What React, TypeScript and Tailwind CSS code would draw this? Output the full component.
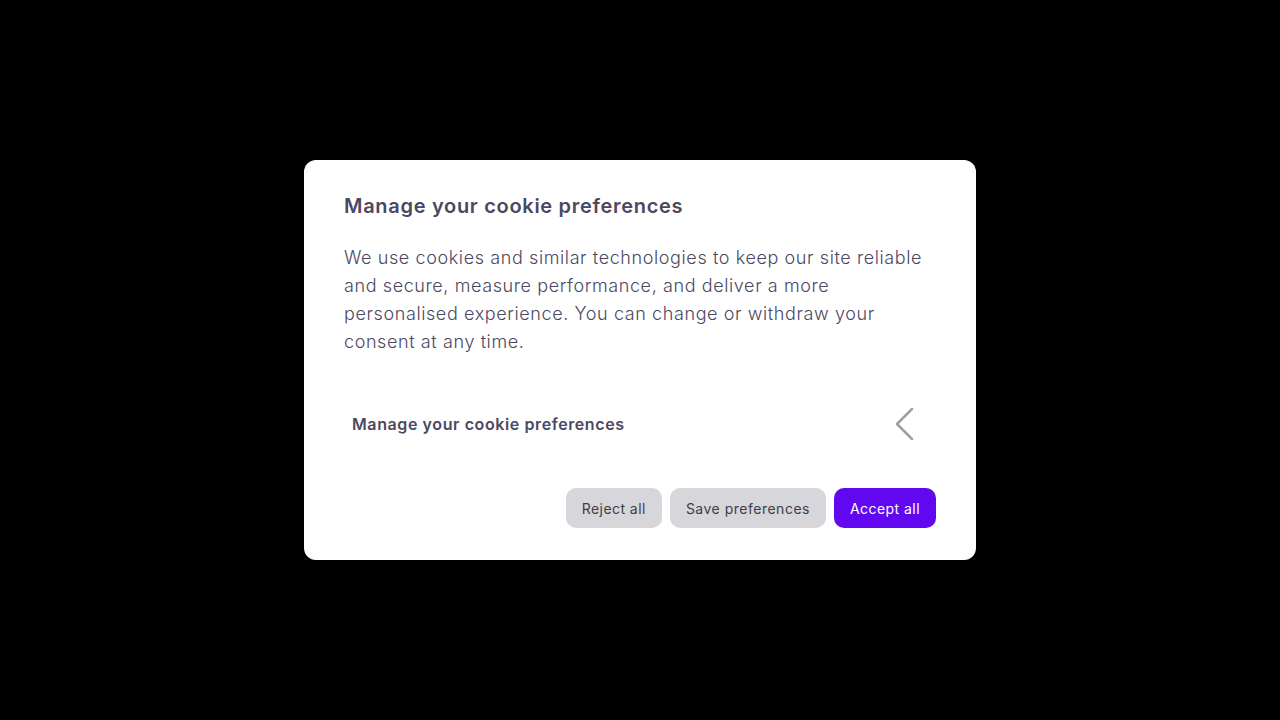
import { useState } from "react";

const font = { fontFamily: "Inter, 'Open Sans', sans-serif" };

export default function App() {
  const [open, setOpen] = useState(false);

  return (
    <div className="flex h-[720px] w-full items-center justify-center bg-black" style={font}>
      {/* Cookie consent dialog */}
      <div className="flex h-[400px] w-[672px] flex-col rounded-xl bg-white px-10 pb-8 pt-8">
        <h2 className="text-[20px] font-semibold leading-7 tracking-[0.7px] text-[#4b4862]">
          Manage your cookie preferences
        </h2>
        <p className="mt-6 text-[18px] font-light leading-7 tracking-[0.6px] text-[#4b4862]">
          We use cookies and similar technologies to keep our site reliable and secure, measure
          performance, and deliver a more personalised experience. You can change or withdraw your
          consent at any time.
        </p>

        {/* Collapsible section */}
        <button
          onClick={() => setOpen(!open)}
          className="mt-10 flex h-14 items-center justify-between pl-2 pr-5 text-left"
        >
          <span className="text-[16px] font-semibold tracking-[0.6px] text-[#4b4862]">
            Manage your cookie preferences
          </span>
          <svg width="22" height="34" viewBox="0 0 22 34" fill="none">
            <path d="M18 2 L3 17 L18 32" stroke="#9e9e9e" strokeWidth="2.5" strokeLinecap="round" strokeLinejoin="round" />
          </svg>
        </button>

        {/* Actions */}
        <div className="mt-auto flex justify-end gap-2">
          <button className="h-10 rounded-[10px] bg-[#d6d6db] px-4 text-[14px] tracking-[0.45px] text-[#3f3d4a]">
            Reject all
          </button>
          <button className="h-10 rounded-[10px] bg-[#d6d6db] px-4 text-[14px] tracking-[0.5px] text-[#3f3d4a]">
            Save preferences
          </button>
          <button className="h-10 rounded-[10px] bg-[#6208f0] px-4 text-[14px] tracking-[0.45px] text-white">
            Accept all
          </button>
        </div>
      </div>
    </div>
  );
}
